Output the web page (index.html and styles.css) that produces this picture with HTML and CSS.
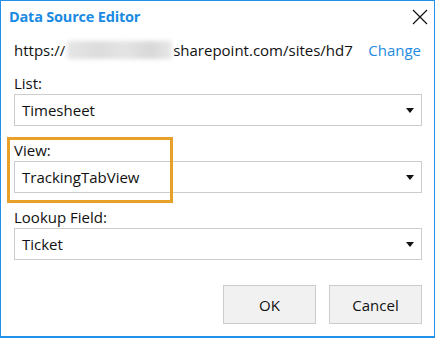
FILE: index.html
```html
<!DOCTYPE html>
<html>
<head>
<meta charset="utf-8">
<link rel="stylesheet" href="styles.css">
</head>
<body>
<div class="dialog">
  <div class="titlebar">
    <span class="title">Data Source Editor</span>
    <svg class="close" width="16" height="16" viewBox="0 0 16 16"><path d="M1 1 L15 15 M15 1 L1 15" stroke="#111" stroke-width="1.2" fill="none"/></svg>
  </div>
  <div class="content">
    <div class="urlrow">
      <span class="url">https://<span class="blur"></span>sharepoint.com/sites/hd7</span>
      <span class="change">Change</span>
    </div>
    <div class="field first">
      <div class="label">List:</div>
      <div class="select"><span>Timesheet</span><svg width="8" height="5" viewBox="0 0 8 5"><path d="M0 0 H8 L4 5 Z" fill="#111"/></svg></div>
    </div>
    <div class="field">
      <div class="label">View:</div>
      <div class="select"><span>TrackingTabView</span><svg width="8" height="5" viewBox="0 0 8 5"><path d="M0 0 H8 L4 5 Z" fill="#111"/></svg></div>
    </div>
    <div class="field">
      <div class="label">Lookup Field:</div>
      <div class="select"><span>Ticket</span><svg width="8" height="5" viewBox="0 0 8 5"><path d="M0 0 H8 L4 5 Z" fill="#111"/></svg></div>
    </div>
    <div class="buttons">
      <div class="btn">OK</div>
      <div class="btn">Cancel</div>
    </div>
  </div>
  <div class="highlight"></div>
</div>
</body>
</html>
```
FILE: styles.css
```css
html, body { margin: 0; padding: 0; background: #fff; }
body { font-family: "Open Sans", "Noto Sans", sans-serif; font-size: 15px; color: #111; }
.dialog {
  position: relative;
  width: 435px; height: 338px; box-sizing: border-box;
  border: 1px solid #2391ea; border-bottom: 2px solid #2391ea;
  background: #fff;
}
.titlebar { height: 30px; display: flex; align-items: center; justify-content: space-between; padding: 0 6px 0 8px; }
.title { font-weight: 700; font-size: 14.5px; color: #1a8ae3; letter-spacing: -0.2px; }
.close { margin-top: 2px; }
.content { padding: 0 12px 0 13px; }
.urlrow { margin-top: 7px; height: 24px; display: flex; align-items: center; justify-content: space-between; padding-right: 1px; }
.url { display: flex; align-items: center; }
.blur { display: inline-block; width: 105px; height: 18px; margin: 0 1px 0 2px; background: linear-gradient(90deg, #e6e6e6, #dcdcdc 30%, #e4e4e4 55%, #d8d8d8 80%, #e8e8e8); filter: blur(2px); }
.change { color: #1f8be0; }
.field { margin-top: 15px; }
.field.first { margin-top: 12px; }
.label { height: 20px; line-height: 18px; }
.select {
  height: 32px; box-sizing: border-box; border: 1px solid #cccccc;
  display: flex; align-items: center; justify-content: space-between;
  padding: 0 7px 0 7px;
}
.select svg { margin-top: 1px; }
.buttons { display: flex; justify-content: flex-end; gap: 13px; margin-top: 25px; }
.btn { width: 93px; height: 39px; box-sizing: border-box; border: 1px solid #cccccc; background: #f1f1f1; display: flex; align-items: center; justify-content: center; }
.highlight { position: absolute; left: 6px; top: 136px; width: 166px; height: 66px; box-sizing: border-box; border: 3px solid #e8a128; }
```
